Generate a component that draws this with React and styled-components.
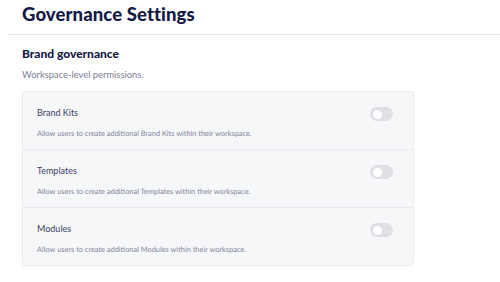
import React from "react";
import styled, { createGlobalStyle } from "styled-components";

const Global = createGlobalStyle`
  html, body { margin: 0; padding: 0; background: #ffffff; }
  body { font-family: Lato, "Open Sans", sans-serif; -webkit-font-smoothing: antialiased; }
`;

const Page = styled.div`
  width: 500px;
  height: 282px;
  overflow: hidden;
  padding-left: 7px;
  box-sizing: border-box;
`;

const Header = styled.header`
  height: 34px;
  border-bottom: 1px solid #e9e9ec;
  padding-left: 15px;
  box-sizing: content-box;
  display: flex;
  align-items: flex-start;
`;

const Title = styled.h1`
  margin: 2px 0 0;
  font-size: 18.5px;
  line-height: 24px;
  font-weight: 900;
  color: #141a46;
  letter-spacing: 0.1px;
`;

const Section = styled.section`
  padding: 11px 0 0 15px;
  display: flex;
  flex-direction: column;
`;

const SectionTitle = styled.h2`
  margin: 0;
  font-size: 12px;
  line-height: 16px;
  font-weight: 900;
  color: #141a46;
`;

const SectionDesc = styled.p`
  margin: 6px 0 0;
  font-size: 9.4px;
  line-height: 13px;
  color: #7c8196;
`;

const Card = styled.div`
  margin-top: 10px;
  width: 392px;
  box-sizing: border-box;
  background: #f6f7f9;
  border: 1px solid #e9eaee;
  border-radius: 3px;
  display: flex;
  flex-direction: column;
`;

const Row = styled.div`
  height: 57px;
  box-sizing: content-box;
  display: flex;
  align-items: flex-start;
  justify-content: space-between;
  padding: 0 20px 0 14px;
  border-top: ${(p) => (p.$first ? "none" : "1px solid #e9eaee")};
`;

const RowText = styled.div`
  display: flex;
  flex-direction: column;
  padding-top: 15px;
`;

const RowTitle = styled.div`
  font-size: 9px;
  line-height: 12px;
  color: #3a3f63;
`;

const RowDesc = styled.div`
  margin-top: 10px;
  font-size: 7.4px;
  line-height: 9px;
  color: #80859a;
  text-rendering: geometricPrecision;
`;

const Toggle = styled.div`
  width: 23px;
  height: 14px;
  border-radius: 7px;
  background: #dfe0e5;
  position: relative;
  margin-top: 15px;
  &::after {
    content: "";
    position: absolute;
    left: 3px;
    top: 2.5px;
    width: 9px;
    height: 9px;
    border-radius: 50%;
    background: #ffffff;
  }
`;

const items = ["Brand Kits", "Templates", "Modules"];

export default function App() {
  return (
    <>
      <Global />
      <Page>
        <Header>
          <Title>Governance Settings</Title>
        </Header>
        <Section>
          <SectionTitle>Brand governance</SectionTitle>
          <SectionDesc>Workspace-level permissions.</SectionDesc>
          <Card>
            {items.map((name, i) => (
              <Row key={name} $first={i === 0}>
                <RowText>
                  <RowTitle>{name}</RowTitle>
                  <RowDesc>
                    Allow users to create additional {name} within their workspace.
                  </RowDesc>
                </RowText>
                <Toggle />
              </Row>
            ))}
          </Card>
        </Section>
      </Page>
    </>
  );
}
